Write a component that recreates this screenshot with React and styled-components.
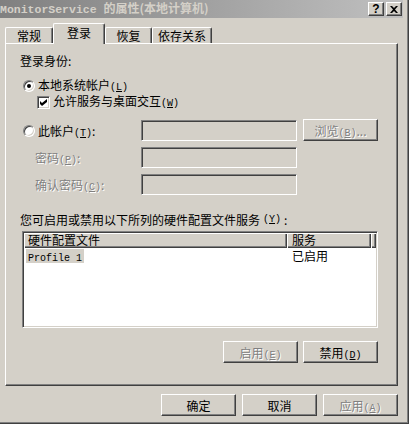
import React from 'react';
import styled, { createGlobalStyle, css } from 'styled-components';

const face = '#d4d0c8';
const shadow = '#808080';
const dark = '#404040';

const GlobalStyle = createGlobalStyle`
  html, body { margin: 0; padding: 0; background: ${face}; }
  body {
    font-family: "Noto Sans CJK SC", "Liberation Sans", sans-serif;
    font-size: 12px;
    color: #000;
  }
  * { box-sizing: border-box; }
`;

const Window = styled.div`
  width: 409px;
  height: 424px;
  background: ${face};
  padding: 0 6px 5px 0;
  box-shadow: inset -1px -1px ${dark}, inset -2px -2px ${shadow};
  display: flex;
  flex-direction: column;
`;

const TitleBar = styled.div`
  height: 18px;
  display: flex;
  align-items: center;
  padding-right: 1px;
  background: linear-gradient(to right, #808080, #c0c0c0);
`;

const TitleText = styled.div`
  flex: 1;
  color: ${face};
  font-weight: bold;
  white-space: nowrap;
  line-height: 18px;
`;

const Mono = styled.span`
  font-family: "Liberation Mono", monospace;
  font-size: ${p => p.$size || 10}px;
`;

const raised = css`
  background: ${face};
  border: 1px solid;
  border-color: #fff ${dark} ${dark} #fff;
  box-shadow: inset -1px -1px ${shadow};
`;

const CaptionButton = styled.div`
  ${raised}
  width: 16px;
  height: 14px;
  margin-left: 2px;
  display: flex;
  align-items: center;
  justify-content: center;
  font-family: "Liberation Sans", sans-serif;
  font-weight: bold;
  font-size: 12px;
  line-height: 1;
`;

const TabStrip = styled.div`
  height: 25px;
  display: flex;
  align-items: flex-end;
  padding: 5px 0 0 5px;
`;

const Tab = styled.div`
  width: ${p => p.$w}px;
  height: 16px;
  display: flex;
  align-items: center;
  justify-content: center;
  background: ${face};
  border-top: 1px solid #fff;
  border-left: 1px solid #fff;
  border-right: 1px solid ${dark};
  border-radius: 2px 2px 0 0;
  box-shadow: inset -1px 0 ${shadow};
  white-space: nowrap;
  ${p => p.$active && css`
    height: 21px;
    margin-bottom: -1px;
    padding-bottom: 3px;
    position: relative;
    z-index: 1;
  `}
`;

const Panel = styled.div`
  margin-left: 5px;
  width: 393px;
  height: 343px;
  border: 1px solid;
  border-color: #fff ${dark} ${dark} #fff;
  box-shadow: inset -1px -1px ${shadow};
  padding: 10px 0 0 14px;
  display: flex;
  flex-direction: column;
`;

const Line = styled.div`
  height: 14px;
  line-height: 14px;
  display: flex;
  align-items: center;
  gap: 3px;
  white-space: nowrap;
  margin-top: ${p => p.$top || 0}px;
  padding-left: ${p => p.$indent || 0}px;
`;

const Dim = styled.span`
  color: ${shadow};
  text-shadow: 1px 1px 0 #fff;
`;

const sunken = css`
  border: 1px solid;
  border-color: ${shadow} #fff #fff ${shadow};
  box-shadow: inset 1px 1px ${dark}, inset -1px -1px ${face};
`;

const Radio = styled.span`
  ${sunken}
  flex: none;
  width: 12px;
  height: 12px;
  border-radius: 50%;
  background: #fff;
  display: flex;
  align-items: center;
  justify-content: center;
  ${p => p.$checked && css`
    &::after {
      content: '';
      width: 4px;
      height: 4px;
      border-radius: 50%;
      background: #000;
    }
  `}
`;

const Check = styled.span`
  ${sunken}
  flex: none;
  width: 13px;
  height: 13px;
  background: #fff;
  display: flex;
  align-items: center;
  justify-content: center;
  svg { display: block; }
`;

const FieldRow = styled.div`
  display: flex;
  align-items: center;
  height: 21px;
  margin-top: ${p => p.$top}px;
`;

const FieldLabel = styled.div`
  width: 121px;
  padding-left: ${p => p.$indent}px;
  display: flex;
  align-items: center;
  gap: 3px;
  white-space: nowrap;
`;

const TextBox = styled.div`
  ${sunken}
  width: 156px;
  height: 21px;
  background: ${face};
`;

const Button = styled.button`
  ${raised}
  width: 75px;
  height: 22px;
  padding: 0;
  font-family: inherit;
  font-size: 12px;
  color: #000;
  white-space: nowrap;
  flex: none;
  &:disabled {
    color: ${shadow};
    text-shadow: 1px 1px 0 #fff;
  }
`;

const SideButton = styled(Button)`
  margin-left: 6px;
  align-self: flex-start;
  margin-top: -1px;
`;

const List = styled.div`
  ${sunken}
  margin: 4px 0 0 2px;
  width: 356px;
  height: 97px;
  padding: 1px;
  background: #fff;
  display: flex;
  flex-direction: column;
`;

const Header = styled.div`
  display: flex;
  height: 15px;
`;

const HeaderCell = styled.div`
  width: ${p => (p.$w ? `${p.$w}px` : 'auto')};
  flex: ${p => (p.$w ? 'none' : '1')};
  height: 15px;
  background: ${face};
  box-shadow: inset 1px 1px #fff, inset -1px -1px ${dark}, inset -2px -2px ${shadow};
  line-height: 14px;
  padding-left: ${p => p.$pad || 0}px;
  white-space: nowrap;
`;

const Row = styled.div`
  display: flex;
  height: 14px;
  line-height: 14px;
  margin-top: 1px;
`;

const Cell = styled.div`
  width: ${p => p.$w}px;
  padding-left: ${p => p.$pad}px;
  white-space: nowrap;
`;

const Selected = styled.span`
  display: inline-block;
  background: ${face};
  padding: 0 2px;
  height: 14px;
`;

const ButtonRow = styled.div`
  display: flex;
  justify-content: flex-end;
  gap: ${p => p.$gap}px;
  margin-top: ${p => p.$top}px;
  width: ${p => (p.$width ? `${p.$width}px` : 'auto')};
  padding-right: ${p => p.$right || 0}px;
`;

const Acc = ({ k }) => (
  <Mono>(<u>{k}</u>)</Mono>
);

export default function App() {
  return (
    <Window>
      <GlobalStyle />
      <TitleBar>
        <TitleText>
          <Mono $size={11.5}>MonitorService </Mono>的属性(本地计算机)
        </TitleText>
        <CaptionButton>?</CaptionButton>
        <CaptionButton>
          <svg width="8" height="7" viewBox="0 0 8 7">
            <path d="M0 0h2l2 2 2-2h2L5 3.5 8 7H6L4 5 2 7H0l3-3.5z" fill="#000" />
          </svg>
        </CaptionButton>
      </TitleBar>

      <TabStrip>
        <Tab $w={48}>常规</Tab>
        <Tab $w={52} $active>登录</Tab>
        <Tab $w={47}>恢复</Tab>
        <Tab $w={60}>依存关系</Tab>
      </TabStrip>

      <Panel>
        <Line>登录身份:</Line>
        <Line $top={11} $indent={3}>
          <Radio $checked />
          <span>本地系统帐户<Acc k="L" /></span>
        </Line>
        <Line $top={2} $indent={17}>
          <Check>
            <svg width="7" height="7" viewBox="0 0 7 7">
              <path d="M0 2l2 2 5-4v3l-5 4-2-2z" fill="#000" />
            </svg>
          </Check>
          <span>允许服务与桌面交互<Acc k="W" /></span>
        </Line>

        <FieldRow $top={11}>
          <FieldLabel $indent={3}>
            <Radio />
            <span>此帐户<Acc k="T" />:</span>
          </FieldLabel>
          <TextBox />
          <SideButton disabled>浏览<Acc k="B" />...</SideButton>
        </FieldRow>
        <FieldRow $top={6}>
          <FieldLabel $indent={15}>
            <Dim>密码<Acc k="P" />:</Dim>
          </FieldLabel>
          <TextBox />
        </FieldRow>
        <FieldRow $top={6}>
          <FieldLabel $indent={15}>
            <Dim>确认密码<Acc k="C" />:</Dim>
          </FieldLabel>
          <TextBox />
        </FieldRow>

        <Line $top={18}>您可启用或禁用以下所列的硬件配置文件服务<Acc k="Y" />:</Line>
        <List>
          <Header>
            <HeaderCell $w={263} $pad={4}>硬件配置文件</HeaderCell>
            <HeaderCell $w={84} $pad={5}>服务</HeaderCell>
            <HeaderCell />
          </Header>
          <Row>
            <Cell $w={263} $pad={2}>
              <Selected><Mono>Profile 1</Mono></Selected>
            </Cell>
            <Cell $w={84} $pad={5}>已启用</Cell>
          </Row>
        </List>

        <ButtonRow $top={13} $gap={5} $width={358}>
          <Button disabled>启用<Acc k="E" /></Button>
          <Button>禁用<Acc k="D" /></Button>
        </ButtonRow>
      </Panel>

      <ButtonRow $top={8} $gap={6} $right={5}>
        <Button>确定</Button>
        <Button>取消</Button>
        <Button disabled>应用<Acc k="A" /></Button>
      </ButtonRow>
    </Window>
  );
}
